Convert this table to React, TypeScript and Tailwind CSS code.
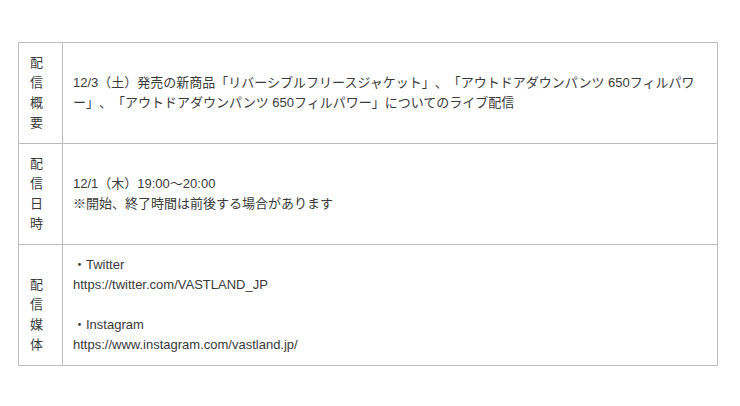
import React from "react";

const font = {
  fontFamily: '"Liberation Sans", Arial, "Noto Sans CJK JP", sans-serif',
};

function Label({ chars, lead = false }: { chars: string[]; lead?: boolean }) {
  return (
    <div className="w-[44px] shrink-0 border-r border-[#bdbdbd] pl-[11px] py-[10px] flex flex-col justify-center">
      {lead && <div className="h-[20px]" />}
      {chars.map((c, i) => (
        <div key={i} className="h-[20px] leading-[20px]">
          {c}
        </div>
      ))}
    </div>
  );
}

export default function App() {
  return (
    <div className="bg-white w-[740px] h-[406px] pt-[42px] pl-[18px]" style={font}>
      <div className="w-[700px] border border-[#bdbdbd] text-[13px] leading-[20px] text-[#3a3a3a] [text-spacing-trim:space-all]">
        <div className="flex border-b border-[#bdbdbd]">
          <Label chars={["配", "信", "概", "要"]} />
          <div className="flex-1 px-[10px] py-[10px] flex flex-col justify-center">
            <div className="whitespace-nowrap">
              12/3（土）発売の新商品「リバーシブルフリースジャケット」、「アウトドアダウンパンツ 650フィルパワ
            </div>
            <div className="whitespace-nowrap">
              ー」、「アウトドアダウンパンツ 650フィルパワー」についてのライブ配信
            </div>
          </div>
        </div>
        <div className="flex border-b border-[#bdbdbd]">
          <Label chars={["配", "信", "日", "時"]} />
          <div className="flex-1 px-[10px] py-[10px] flex flex-col justify-center">
            <div className="whitespace-nowrap">12/1（木）19:00～20:00</div>
            <div className="whitespace-nowrap">※開始、終了時間は前後する場合があります</div>
          </div>
        </div>
        <div className="flex">
          <Label chars={["配", "信", "媒", "体"]} lead />
          <div className="flex-1 px-[10px] py-[10px] flex flex-col justify-center">
            <div className="whitespace-nowrap">・Twitter</div>
            <div className="whitespace-nowrap">https://twitter.com/VASTLAND_JP</div>
            <div className="h-[20px]" />
            <div className="whitespace-nowrap">・Instagram</div>
            <div className="whitespace-nowrap">https://www.instagram.com/vastland.jp/</div>
          </div>
        </div>
      </div>
    </div>
  );
}
